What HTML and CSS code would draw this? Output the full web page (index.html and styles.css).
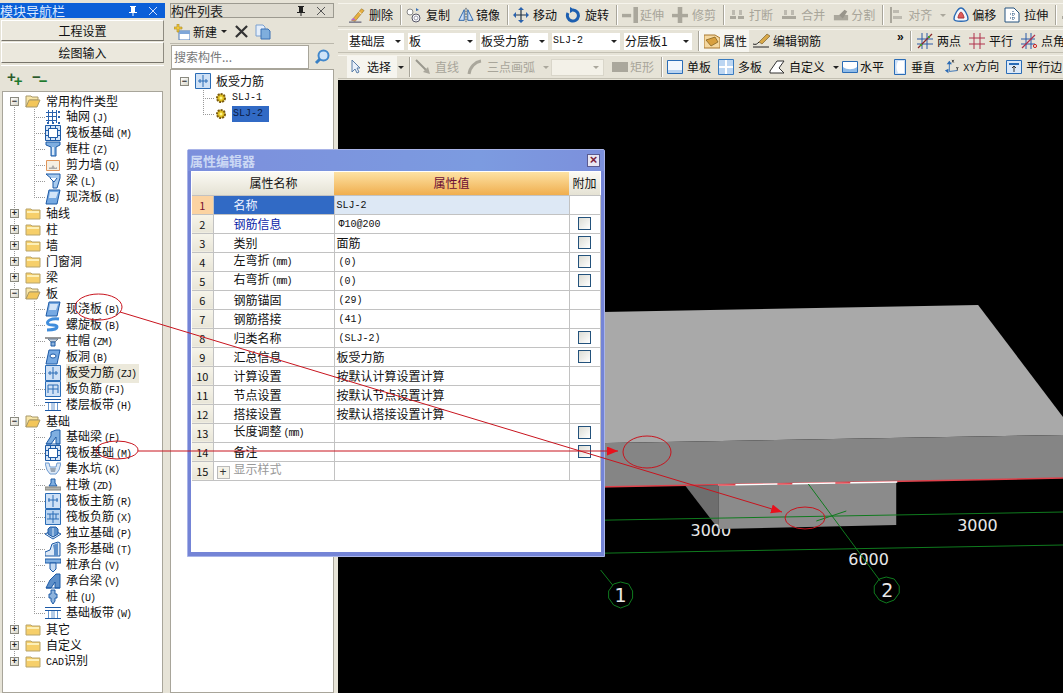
FILE: index.html
```html
<!DOCTYPE html>
<html lang="zh">
<head>
<meta charset="utf-8">
<title>属性编辑器</title>
<link rel="stylesheet" href="styles.css">
</head>
<body>
<svg class="sprite" xmlns="http://www.w3.org/2000/svg">
<defs>
<symbol id="fold" viewBox="0 0 16 16"><path d="M1 4h5l1 1h8v9H1z" fill="#f6cf6a" stroke="#b8a46a"/><path d="M2 6h12v2H2z" fill="#fdf0b8"/></symbol>
<symbol id="open" viewBox="0 0 16 16"><path d="M1 3h5l1 1h6v3H5L1 14z" fill="#f8e6a8" stroke="#a89868"/><path d="M1 14l3-7h11l-3 7z" fill="#f3c65a" stroke="#a89868"/></symbol>
<symbol id="grid" viewBox="0 0 16 16"><path d="M1 3.500h11M1 7.500h11M1 11.500h11M3.500 1v13M7.500 1v13M11.500 1v13" stroke="#2a62ad" fill="none"/><path d="M13 2h2v2h-2zM13 7h2v2h-2zM2 13h2v2H2zM7 13h2v2H7zM13 13h2v2h-2z" fill="#2a62ad"/></symbol>
<symbol id="raft" viewBox="0 0 16 16"><path d="M.5.5h15v15H.5z" fill="#d5e5f7" stroke="#1d5aa6"/><path d="M3.500 3.500h9v9h-9z" fill="#fff" stroke="#1d5aa6"/><path d="M0 5.500h3M0 10.500h3M13 5.500h3M13 10.500h3M5.500 0v3M10.500 0v3M5.500 13v3M10.500 13v3" stroke="#1d5aa6"/></symbol>
<symbol id="col" viewBox="0 0 16 16"><path d="M1 1h14v3l-4 2v9H6V6L1 4z" fill="#7faee0" stroke="#1d5aa6"/><path d="M7 6h2v8H7z" fill="#d9e8f8"/></symbol>
<symbol id="wall" viewBox="0 0 16 16"><path d="M1.500 3.500h13v10h-13z" fill="#f4efe4" stroke="#e0955a"/><path d="M4 11l1-1 1 1 2-3 2 3 2-1v2H4z" fill="#aaa"/></symbol>
<symbol id="beam" viewBox="0 0 16 16"><path d="M1 1h14v4l-3 10H8V7z" fill="#a9cbee" stroke="#1d5aa6"/><path d="M5 5l4 4 3-4" fill="#fff" stroke="#1d5aa6"/></symbol>
<symbol id="slab" viewBox="0 0 16 16"><path d="M4 1h11l-3 14H1z" fill="#76a9e2" stroke="#1d5aa6"/><path d="M5 3h8l-2 6H4z" fill="#d4e5f8"/></symbol>
<symbol id="spir" viewBox="0 0 16 16"><path d="M14 2C6 1 1 4 3 7c2 2 9 0 9 3 0 2-5 3-10 3" fill="none" stroke="#3f8ddc" stroke-width="3"/></symbol>
<symbol id="cap" viewBox="0 0 16 16"><path d="M0 4h16v2H0z" fill="#999"/><path d="M3 6h10l-3 3H6z" fill="#c9d5e2" stroke="#6d7f93"/><path d="M6 9h4v4H6z" fill="#8eb3dc" stroke="#1d5aa6"/></symbol>
<symbol id="hole" viewBox="0 0 16 16"><path d="M4 1h11l-3 14H1z" fill="#76a9e2" stroke="#1d5aa6"/><ellipse cx="8" cy="7" rx="3" ry="2" fill="#fff" stroke="#1d5aa6"/></symbol>
<symbol id="bar" viewBox="0 0 16 16"><path d="M.5.500h15v15H.5z" fill="#cfe1f6" stroke="#2a6cb6"/><path d="M8 2v12M3 8h10M5 6v4M11 6v4" stroke="#2a6cb6" fill="none"/></symbol>
<symbol id="neg" viewBox="0 0 16 16"><path d="M.5.500h15v15H.5z" fill="#cfe1f6" stroke="#2a6cb6"/><path d="M3 4h10v4H3zM8 4v9M3 8v4M13 8v4" stroke="#2a6cb6" fill="none"/></symbol>
<symbol id="band" viewBox="0 0 16 16"><path d="M0 2.500h16M0 13.500h16M0 5.500h16" stroke="#1d5aa6"/><path d="M3.500 6v7M7 6v7M9 6v7M12.500 6v7" stroke="#6d9ad0"/></symbol>
<symbol id="fbeam" viewBox="0 0 16 16"><path d="M1 15l5-8V3l5-2h4v14H11V8L6 15z" fill="#7faee0" stroke="#1d5aa6"/><path d="M1 15h14" stroke="#1d5aa6"/></symbol>
<symbol id="pit" viewBox="0 0 16 16"><path d="M0 2h4l1 4h6l1-4h4l-2 7-3 4H5L2 9z" fill="#dce8f6" stroke="#6d9ad0"/><path d="M5 7h6l-1 4H6z" fill="#9aa7b6"/></symbol>
<symbol id="pier" viewBox="0 0 16 16"><path d="M6 2h4v4l2 3H4l2-3z" fill="#7faee0" stroke="#1d5aa6"/><path d="M0 10h16v3H0z" fill="#b5b5b0" stroke="#85857f"/></symbol>
<symbol id="rmain" viewBox="0 0 16 16"><path d="M.5.500h15v15H.5z" fill="#cfe1f6" stroke="#2a6cb6"/><path d="M8 2v12M3 7h10M4 5v4M12 5v4" stroke="#2a6cb6" fill="none"/></symbol>
<symbol id="rneg" viewBox="0 0 16 16"><path d="M.5.500h15v15H.5z" fill="#bcd6f2" stroke="#2a6cb6"/><path d="M2 5h12M2 10h12M8 2v12M5 5v5M11 5v5" stroke="#2a6cb6" fill="none"/></symbol>
<symbol id="iso" viewBox="0 0 16 16"><path d="M0 9l8-4 8 4-8 5z" fill="#e5eef8" stroke="#1d5aa6"/><path d="M5 2h6l2 2v5l-5 3-5-3V4z" fill="#5d8fc9" stroke="#1d5aa6"/><path d="M8 3v8" stroke="#dbe9f8"/></symbol>
<symbol id="strip" viewBox="0 0 16 16"><path d="M0 15v-4l5-2 2-6 6-2 2 1v13z" fill="#dce8f6" stroke="#1d5aa6"/><path d="M8 4l5-2v13H9V9z" fill="#5d8fc9"/></symbol>
<symbol id="pcap" viewBox="0 0 16 16"><path d="M0 2h16v4H0z" fill="#7faee0" stroke="#1d5aa6"/><path d="M5 6h6v6l-3 3-3-3z" fill="#c4daf2" stroke="#1d5aa6"/></symbol>
<symbol id="cbeam" viewBox="0 0 16 16"><path d="M1 15l4-8 6-6h4v14H10V9L6 15z" fill="#5d8fc9" stroke="#1d5aa6"/><path d="M1 15h14" stroke="#1d5aa6"/></symbol>
<symbol id="pile" viewBox="0 0 16 16"><path d="M6 1h4v4h2v4H10v3l-2 3-2-3V9H4V5h2z" fill="#8eb3dc" stroke="#1d5aa6"/></symbol>
<symbol id="gear" viewBox="0 0 12 12"><circle cx="6" cy="6" r="4" fill="#e0c020" stroke="#7a5a10" stroke-dasharray="2 1" stroke-width="2"/><circle cx="6" cy="6" r="1.500" fill="#fff48a"/></symbol>
<symbol id="newi" viewBox="0 0 16 16"><path d="M5 7h11v9H5z" fill="#fff" stroke="#4a78b8"/><path d="M5 7h11v3H5z" fill="#7fa6d8"/><path d="M3 0h2v3h3v2H5v3H3V5H0V3h3z" fill="#f0c83c" stroke="#a88820" stroke-width=".6"/></symbol>
<symbol id="cross" viewBox="0 0 14 14"><path d="M1 1l12 12M13 1L1 13" stroke="#333" stroke-width="2.400"/></symbol>
<symbol id="docs" viewBox="0 0 16 16"><path d="M1 1h7l2 2v9H1z" fill="#e4eefa" stroke="#7aa0d0"/><path d="M6 5h7l2 2v8H6z" fill="#7faedd" stroke="#3a70b4"/></symbol>
<symbol id="srch" viewBox="0 0 16 16"><circle cx="9.500" cy="6.500" r="5" fill="#cfe4f8" stroke="#4288cc" stroke-width="2"/><path d="M6 10l-4 4" stroke="#3a80c4" stroke-width="3"/></symbol>
<symbol id="brush" viewBox="0 0 18 18"><path d="M3 15L14 2l3 2L7 16z" fill="#e8b040" stroke="#8a6a20" stroke-width=".6"/><path d="M11 5l3 3" stroke="#fff"/><path d="M0 17h14" stroke="#335"/><path d="M2 15l3-3 3 3z" fill="#b66acb"/></symbol>
<symbol id="copy" viewBox="0 0 16 16"><circle cx="4" cy="5" r="3" fill="#fff" stroke="#888"/><circle cx="10" cy="11" r="4" fill="#fff" stroke="#556"/><circle cx="10" cy="11" r="2" fill="none" stroke="#99a"/><path d="M10 1l3 2-3 1z" fill="#3a70b4"/></symbol>
<symbol id="mirr" viewBox="0 0 18 16"><path d="M7 2L1 14h6zM11 2l6 12h-6z" fill="#cfe1f6" stroke="#1d5aa6"/><path d="M9 0v16" stroke="#234" stroke-dasharray="2 1"/></symbol>
<symbol id="move" viewBox="0 0 16 16"><path d="M8 1v14M1 8h14" stroke="#234" stroke-width="1.200"/><path d="M8 0l3 3H5zM8 16l3-3H5zM0 8l3 3V5zM16 8l-3 3V5z" fill="#2a62ad"/></symbol>
<symbol id="rota" viewBox="0 0 16 16"><path d="M8 3a5.500 5.500 0 1 1-5 3" fill="none" stroke="#1d5fb0" stroke-width="3"/><path d="M5 0l5 3-5 3z" fill="#1d5fb0"/></symbol>
<symbol id="ext" viewBox="0 0 14 14"><path d="M0 6h8v3H0z" fill="#aaa79c"/><path d="M10 0h4v14h-4z" fill="#aaa79c"/></symbol>
<symbol id="trim" viewBox="0 0 14 14"><path d="M0 6h14v3H0z" fill="#aaa79c"/><path d="M5 0h4v14H5z" fill="#aaa79c"/></symbol>
<symbol id="brk" viewBox="0 0 16 16"><path d="M1 9h6v3H1zM9 9h6v3H9z" fill="#aaa79c"/><path d="M3 3h3v5H3zM10 3h3v5h-3z" fill="#bdbab0"/></symbol>
<symbol id="merg" viewBox="0 0 16 16"><path d="M1 9h14v3H1z" fill="#aaa79c"/><path d="M3 3h3v5H3zM10 3h3v5h-3z" fill="#bdbab0"/></symbol>
<symbol id="splt" viewBox="0 0 18 16"><path d="M1 8h16v6H1z" fill="#aaa79c"/><path d="M7 8l6-6 3 2-5 8z" fill="#98958b"/></symbol>
<symbol id="algn" viewBox="0 0 14 16"><path d="M1 0h2v16H1z" fill="#aaa79c"/><path d="M4 3h6v3H4zM4 9h9v3H4z" fill="#bdbab0"/></symbol>
<symbol id="offs" viewBox="0 0 16 16"><path d="M1 12C1 8 5 1 8 1s7 7 7 11c0 3-14 3-14 0z" fill="#f4f6fb" stroke="#2a6ab4" stroke-width="1.400"/><path d="M5 11c0-2 2-6 3-6s3 4 3 6z" fill="#e05c5c" stroke="#a33"/></symbol>
<symbol id="strt" viewBox="0 0 16 16"><path d="M1 1h9l5 5v9H1z" fill="#fff" stroke="#24527e"/><path d="M9 4v9M6 7h6M6 11h6" stroke="#24527e" stroke-dasharray="1 1"/></symbol>
<symbol id="prop" viewBox="0 0 16 16"><path d="M0 2h11l5 3v10H0z" fill="#f5d8a0" stroke="#a87830"/><path d="M2 7l9-3 3 5-7 4z" fill="#d8a040" stroke="#7a5a18" stroke-width=".7"/></symbol>
<symbol id="edit" viewBox="0 0 18 16"><path d="M6 9L14 1l3 2-8 8z" fill="#d8a848" stroke="#6a5020" stroke-width=".6"/><path d="M0 14h16M0 11c3 1 4 0 6-2" stroke="#222" fill="none"/></symbol>
<symbol id="twop" viewBox="0 0 16 16"><path d="M0 6h16M0 11h16M5 0v16M10 0v16" stroke="#2a5aa8"/><path d="M1 15L15 1" stroke="#8c2a2a" stroke-width="1.200"/><path d="M3 11h2v2H3zM11 3h2v2h-2z" fill="#4a9a2a"/></symbol>
<symbol id="para" viewBox="0 0 16 16"><path d="M0 5h16M0 11h16M5 0v16M11 0v16" stroke="#b0304a"/></symbol>
<symbol id="angl" viewBox="0 0 16 16"><path d="M0 6h14M0 11h14M5 0v16M10 0v16" stroke="#2a5aa8"/><path d="M1 15L14 2" stroke="#b0304a" stroke-width="1.200"/><circle cx="14" cy="13" r="1.600" fill="none" stroke="#d02020"/></symbol>
<symbol id="arrw" viewBox="0 0 10 16"><path d="M1 1v12l3-3 2 4 2-1-2-4h3z" fill="#e8f0fa" stroke="#5a7ea8"/></symbol>
<symbol id="line" viewBox="0 0 16 16"><path d="M1 1l10 10" stroke="#9a988e" stroke-width="2"/><path d="M15 15l-7-2 5-5z" fill="#aaa79c"/></symbol>
<symbol id="arc" viewBox="0 0 16 16"><path d="M2 15C3 8 8 3 14 2" stroke="#aaa79c" stroke-width="3" fill="none"/></symbol>
<symbol id="rect" viewBox="0 0 16 16"><path d="M0 3h16v10H0z" fill="#aaa79c"/></symbol>
<symbol id="sing" viewBox="0 0 16 16"><path d="M.5 1.500h15v13H.5z" fill="#f2f7fd" stroke="#2a6cb6"/><path d="M1 11h14v3H1z" fill="#b7d2f0"/></symbol>
<symbol id="mult" viewBox="0 0 16 16"><path d="M.5.500h15v15H.5z" fill="#bcd6f2" stroke="#3a7cc0"/><path d="M8 1v14M1 8h14" stroke="#fff" stroke-width="2"/></symbol>
<symbol id="cust" viewBox="0 0 16 16"><path d="M1 12L8 2h7l-5 7 5 5H1z" fill="#fff" stroke="#333"/></symbol>
<symbol id="horz" viewBox="0 0 16 16"><path d="M.5 2.500h15v11H.5z" fill="#fff" stroke="#2a6cb6"/><path d="M1 8c4 3 10 3 14 0v5H1z" fill="#8fbbe8"/></symbol>
<symbol id="vert" viewBox="0 0 16 16"><path d="M2.500.5h11v15h-11z" fill="#cfe1f6" stroke="#2a6cb6"/><path d="M6 2C4 6 4 10 6 14h6V2z" fill="#fff"/></symbol>
<symbol id="xy" viewBox="0 0 18 18"><path d="M6 3v11M6 14l9-1" stroke="#2a6ab4" fill="none"/><path d="M6 2l3 4H3zM1 13l4-2v5z" fill="#2a6ab4"/><path d="M9 1l2 3M11 1L9 4M14 9l1 2 1-2M15 11v2" stroke="#333" fill="none"/></symbol>
<symbol id="pare" viewBox="0 0 16 16"><path d="M.5 1.500h15v13H.5z" fill="#dce9f8" stroke="#2a6cb6"/><path d="M3 5h10" stroke="#2a6cb6" stroke-width="2"/><path d="M8 13V7M6 9l2-2 2 2" stroke="#333" fill="none"/></symbol>
<symbol id="pin" viewBox="0 0 10 12"><path d="M2 1h6v1H7v5h2v1H5.500v3h-1V8H1V7h2V2H2z" fill="currentColor"/></symbol>
<symbol id="shut" viewBox="0 0 10 10"><path d="M1 1l8 8M9 1L1 9" stroke="currentColor" fill="none"/></symbol>
</defs>
</svg>

<div class="app">
  <aside class="nav">
    <div class="title active"><span>模块导航栏</span><svg class="pin"><use href="#pin"/></svg><svg class="shut"><use href="#shut"/></svg></div>
    <div class="navbtn">工程设置</div>
    <div class="navbtn">绘图输入</div>
    <div class="navtools"><span class="pm">+<i>+</i></span><span class="pm">−<i>−</i></span></div>
    <ul class="tree">
      <li class="top"><div class="row"><b class="box">−</b><svg class="ic"><use href="#open"/></svg><span class="lb">常用构件类型</span></div>
        <ul>
          <li class="row kid"><svg class="ic"><use href="#grid"/></svg><span class="lb">轴网<span class="k">(J)</span></span></li>
          <li class="row kid"><svg class="ic"><use href="#raft"/></svg><span class="lb">筏板基础<span class="k">(M)</span></span></li>
          <li class="row kid"><svg class="ic"><use href="#col"/></svg><span class="lb">框柱<span class="k">(Z)</span></span></li>
          <li class="row kid"><svg class="ic"><use href="#wall"/></svg><span class="lb">剪力墙<span class="k">(Q)</span></span></li>
          <li class="row kid"><svg class="ic"><use href="#beam"/></svg><span class="lb">梁<span class="k">(L)</span></span></li>
          <li class="row kid"><svg class="ic"><use href="#slab"/></svg><span class="lb">现浇板<span class="k">(B)</span></span></li>
        </ul>
      </li>
      <li class="top"><div class="row"><b class="box">+</b><svg class="ic"><use href="#fold"/></svg><span class="lb">轴线</span></div></li>
      <li class="top"><div class="row"><b class="box">+</b><svg class="ic"><use href="#fold"/></svg><span class="lb">柱</span></div></li>
      <li class="top"><div class="row"><b class="box">+</b><svg class="ic"><use href="#fold"/></svg><span class="lb">墙</span></div></li>
      <li class="top"><div class="row"><b class="box">+</b><svg class="ic"><use href="#fold"/></svg><span class="lb">门窗洞</span></div></li>
      <li class="top"><div class="row"><b class="box">+</b><svg class="ic"><use href="#fold"/></svg><span class="lb">梁</span></div></li>
      <li class="top"><div class="row"><b class="box">−</b><svg class="ic"><use href="#open"/></svg><span class="lb">板</span></div>
        <ul>
          <li class="row kid"><svg class="ic"><use href="#slab"/></svg><span class="lb">现浇板<span class="k">(B)</span></span></li>
          <li class="row kid"><svg class="ic"><use href="#spir"/></svg><span class="lb">螺旋板<span class="k">(B)</span></span></li>
          <li class="row kid"><svg class="ic"><use href="#cap"/></svg><span class="lb">柱帽<span class="k">(ZM)</span></span></li>
          <li class="row kid"><svg class="ic"><use href="#hole"/></svg><span class="lb">板洞<span class="k">(B)</span></span></li>
          <li class="row kid"><svg class="ic"><use href="#bar"/></svg><span class="lb sel">板受力筋<span class="k">(ZJ)</span></span></li>
          <li class="row kid"><svg class="ic"><use href="#neg"/></svg><span class="lb">板负筋<span class="k">(FJ)</span></span></li>
          <li class="row kid"><svg class="ic"><use href="#band"/></svg><span class="lb">楼层板带<span class="k">(H)</span></span></li>
        </ul>
      </li>
      <li class="top"><div class="row"><b class="box">−</b><svg class="ic"><use href="#open"/></svg><span class="lb">基础</span></div>
        <ul>
          <li class="row kid"><svg class="ic"><use href="#fbeam"/></svg><span class="lb">基础梁<span class="k">(F)</span></span></li>
          <li class="row kid"><svg class="ic"><use href="#raft"/></svg><span class="lb">筏板基础<span class="k">(M)</span></span></li>
          <li class="row kid"><svg class="ic"><use href="#pit"/></svg><span class="lb">集水坑<span class="k">(K)</span></span></li>
          <li class="row kid"><svg class="ic"><use href="#pier"/></svg><span class="lb">柱墩<span class="k">(ZD)</span></span></li>
          <li class="row kid"><svg class="ic"><use href="#rmain"/></svg><span class="lb">筏板主筋<span class="k">(R)</span></span></li>
          <li class="row kid"><svg class="ic"><use href="#rneg"/></svg><span class="lb">筏板负筋<span class="k">(X)</span></span></li>
          <li class="row kid"><svg class="ic"><use href="#iso"/></svg><span class="lb">独立基础<span class="k">(P)</span></span></li>
          <li class="row kid"><svg class="ic"><use href="#strip"/></svg><span class="lb">条形基础<span class="k">(T)</span></span></li>
          <li class="row kid"><svg class="ic"><use href="#pcap"/></svg><span class="lb">桩承台<span class="k">(V)</span></span></li>
          <li class="row kid"><svg class="ic"><use href="#cbeam"/></svg><span class="lb">承台梁<span class="k">(V)</span></span></li>
          <li class="row kid"><svg class="ic"><use href="#pile"/></svg><span class="lb">桩<span class="k">(U)</span></span></li>
          <li class="row kid"><svg class="ic"><use href="#band"/></svg><span class="lb">基础板带<span class="k">(W)</span></span></li>
        </ul>
      </li>
      <li class="top"><div class="row"><b class="box">+</b><svg class="ic"><use href="#fold"/></svg><span class="lb">其它</span></div></li>
      <li class="top"><div class="row"><b class="box">+</b><svg class="ic"><use href="#fold"/></svg><span class="lb">自定义</span></div></li>
      <li class="top"><div class="row"><b class="box">+</b><svg class="ic"><use href="#fold"/></svg><span class="lb"><span class="m">CAD</span>识别</span></div></li>
    </ul>
  </aside>

  <aside class="list">
    <div class="title"><span>构件列表</span><svg class="pin"><use href="#pin"/></svg><svg class="shut"><use href="#shut"/></svg></div>
    <div class="listtools">
      <svg class="ic"><use href="#newi"/></svg><span>新建</span><i class="dn"></i>
      <svg class="ic x"><use href="#cross"/></svg>
      <svg class="ic"><use href="#docs"/></svg>
    </div>
    <div class="search"><div class="sbox">搜索构件...</div><svg class="ic"><use href="#srch"/></svg></div>
    <div class="ltree">
      <div class="lroot"><b class="box">−</b><svg class="ic"><use href="#bar"/></svg><span>板受力筋</span></div>
      <div class="lkid"><svg class="gear"><use href="#gear"/></svg><span class="m">SLJ-1</span></div>
      <div class="lkid"><svg class="gear"><use href="#gear"/></svg><span class="m on">SLJ-2</span></div>
    </div>
  </aside>

  <main class="main">
    <div class="tb r1">
      <div class="t"><svg class="ic"><use href="#brush"/></svg>删除</div><i class="sep"></i>
      <div class="t"><svg class="ic"><use href="#copy"/></svg>复制</div>
      <div class="t g2"><svg class="ic"><use href="#mirr"/></svg>镜像</div><i class="sep"></i>
      <div class="t"><svg class="ic"><use href="#move"/></svg>移动</div>
      <div class="t"><svg class="ic"><use href="#rota"/></svg>旋转</div><i class="sep"></i>
      <div class="t off g2"><svg class="ic"><use href="#ext"/></svg>延伸</div>
      <div class="t off"><svg class="ic"><use href="#trim"/></svg>修剪</div><i class="sep"></i>
      <div class="t off"><svg class="ic"><use href="#brk"/></svg>打断</div>
      <div class="t off"><svg class="ic"><use href="#merg"/></svg>合并</div>
      <div class="t off g2"><svg class="ic"><use href="#splt"/></svg>分割</div><i class="sep"></i>
      <div class="t off m7"><svg class="ic"><use href="#algn"/></svg>对齐<i class="dn"></i></div>
      <div class="t g3"><svg class="ic"><use href="#offs"/></svg>偏移</div>
      <div class="t"><svg class="ic"><use href="#strt"/></svg>拉伸</div><i class="sep"></i>
      <svg class="ic"><use href="#brk"/></svg>
    </div>
    <div class="tb r2">
      <div class="cb first">基础层<i class="dn"></i></div>
      <div class="cb">板<i class="dn"></i></div>
      <div class="cb">板受力筋<i class="dn"></i></div>
      <div class="cb"><span class="m">SLJ-2</span><i class="dn"></i></div>
      <div class="cb">分层板1<i class="dn"></i></div>
      <i class="sep"></i>
      <div class="t hot"><svg class="ic"><use href="#prop"/></svg>属性</div>
      <div class="t g2"><svg class="ic w18"><use href="#edit"/></svg>编辑钢筋</div>
      <span class="more">»</span>
      <i class="sep"></i>
      <div class="t"><svg class="ic"><use href="#twop"/></svg>两点</div>
      <div class="t"><svg class="ic"><use href="#para"/></svg>平行</div>
      <div class="t"><svg class="ic"><use href="#angl"/></svg>点角</div>
    </div>
    <div class="tb r3">
      <div class="t pick"><svg class="ic a"><use href="#arrw"/></svg>选择</div><i class="dn"></i><i class="sep"></i>
      <div class="t off"><svg class="ic"><use href="#line"/></svg>直线</div>
      <div class="t off m2"><svg class="ic"><use href="#arc"/></svg>三点画弧<i class="dn"></i></div>
      <div class="emptycb"><i class="dn"></i></div>
      <div class="t off g2"><svg class="ic"><use href="#rect"/></svg>矩形</div><i class="sep"></i>
      <div class="t m7"><svg class="ic"><use href="#sing"/></svg>单板</div>
      <div class="t m7"><svg class="ic"><use href="#mult"/></svg>多板</div>
      <div class="t m3"><svg class="ic"><use href="#cust"/></svg>自定义<i class="dn"></i></div>
      <div class="t g2"><svg class="ic"><use href="#horz"/></svg>水平</div>
      <div class="t g3"><svg class="ic"><use href="#vert"/></svg>垂直</div>
      <div class="t g2 m7"><svg class="ic w18"><use href="#xy"/></svg><span><span class="m">XY</span>方向</span></div>
      <div class="t"><svg class="ic"><use href="#pare"/></svg>平行边</div>
    </div>
    <svg class="scene" viewBox="337 80 726 613" preserveAspectRatio="none">
      <path d="M500 314L978 305 1063 417 1063 435 500 445z" fill="#a9a9a9"/>
      <path d="M500 445L1063 435V478L500 489z" fill="#858585"/>
      <path d="M500 489L1063 478" stroke="#e0404a" stroke-width="1.500"/>
      <path d="M685 486L718 529V485z" fill="#6e6e6e"/>
      <g class="dim"><text x="690" y="536">3000</text><text x="957" y="531">3000</text><text x="848" y="565">6000</text></g>
      <path d="M718 485L896 482V525L718 529z" fill="#8b8b8b"/>
      <path d="M718 485L897 482" stroke="#fff" stroke-width="1.500"/>
      <path d="M718 485L735 484.700M777 484L792 483.800M835 483L850 482.800" stroke="#e0404a" stroke-width="1.500"/>
      <g class="grn">
        <path d="M500 522L1063 512M500 555L1063 545M808 484L880 581M816 521L846 511M600 570L612 585"/>
        <path d="M613 584l7-2 8 2 4 7 0 7-4 7-8 3-7-3-5-7 0-7z"/>
        <path d="M879 579l7-2 8 2 5 7 0 7-5 7-8 3-7-3-5-7 0-7z"/>
      </g>
      <g class="dim"><text class="num" x="620" y="602" text-anchor="middle">1</text><text class="num" x="887" y="597" text-anchor="middle">2</text></g>
    </svg>
  </main>
</div>

<section class="dialog">
  <header class="dtitle"><span>属性编辑器</span><b class="dclose">×</b></header>
  <div class="dbody">
    <table class="grid">
      <colgroup><col class="w0"><col class="w1"><col class="w2"><col class="w3"></colgroup>
      <thead><tr><th class="g"></th><th>属性名称</th><th class="hv">属性值</th><th>附加</th></tr></thead>
      <tbody>
        <tr><td class="g one">1</td><td class="nm act">名称</td><td class="val cur"><span class="m">SLJ-2</span></td><td></td></tr>
        <tr><td class="g">2</td><td class="nm blue">钢筋信息</td><td class="val"><span class="m ind">Φ10@200</span></td><td class="ck"><i></i></td></tr>
        <tr><td class="g">3</td><td class="nm">类别</td><td class="val">面筋</td><td class="ck"><i></i></td></tr>
        <tr><td class="g">4</td><td class="nm">左弯折<span class="k">(mm)</span></td><td class="val"><span class="m ind">(0)</span></td><td class="ck"><i></i></td></tr>
        <tr><td class="g">5</td><td class="nm">右弯折<span class="k">(mm)</span></td><td class="val"><span class="m ind">(0)</span></td><td class="ck"><i></i></td></tr>
        <tr><td class="g">6</td><td class="nm">钢筋锚固</td><td class="val"><span class="m ind">(29)</span></td><td></td></tr>
        <tr><td class="g">7</td><td class="nm">钢筋搭接</td><td class="val"><span class="m ind">(41)</span></td><td></td></tr>
        <tr><td class="g">8</td><td class="nm">归类名称</td><td class="val"><span class="m ind">(SLJ-2)</span></td><td class="ck"><i></i></td></tr>
        <tr><td class="g">9</td><td class="nm">汇总信息</td><td class="val">板受力筋</td><td class="ck"><i></i></td></tr>
        <tr><td class="g">10</td><td class="nm">计算设置</td><td class="val">按默认计算设置计算</td><td></td></tr>
        <tr><td class="g">11</td><td class="nm">节点设置</td><td class="val">按默认节点设置计算</td><td></td></tr>
        <tr><td class="g">12</td><td class="nm">搭接设置</td><td class="val">按默认搭接设置计算</td><td></td></tr>
        <tr><td class="g">13</td><td class="nm">长度调整<span class="k">(mm)</span></td><td class="val"></td><td class="ck"><i></i></td></tr>
        <tr><td class="g">14</td><td class="nm">备注</td><td class="val"></td><td class="ck"><i></i></td></tr>
        <tr><td class="g">15</td><td class="nm grey"><b class="plus">+</b>显示样式</td><td class="val"></td><td></td></tr>
      </tbody>
    </table>
  </div>
</section>

<svg class="marks" viewBox="0 0 1063 693">
  <defs>
    <marker id="head" markerWidth="12" markerHeight="10" refX="11" refY="4.500" orient="auto" markerUnits="userSpaceOnUse"><path d="M0 0L11 4.500 0 9z" fill="#e8101c"/></marker>
  </defs>
  <ellipse cx="98.500" cy="307" rx="23.500" ry="13"/>
  <ellipse cx="117" cy="450" rx="21" ry="9"/>
  <ellipse cx="647" cy="452" rx="24" ry="16"/>
  <ellipse cx="805" cy="518" rx="20" ry="11"/>
  <path d="M138 451H618" marker-end="url(#head)"/>
  <path d="M120 312L782 512" marker-end="url(#head)"/>
</svg>
</body>
</html>
```
FILE: styles.css
```css
* { box-sizing: border-box; }
html, body { margin: 0; height: 693px; overflow: hidden; }
body { background: #e6e3d7; font: 12px/16px "Noto Sans CJK SC", "Liberation Sans", sans-serif; color: #111; }
ul { list-style: none; margin: 0; padding: 0; }
i { font-style: normal; }
.sprite { width: 0; height: 0; position: absolute; }
.m { font: 10px/16px "Liberation Mono", monospace; }
.k { font: 10px/16px "Liberation Mono", monospace; letter-spacing: -1px; margin-left: 2px; }
.ic { width: 16px; height: 16px; flex: none; }
.w18 { width: 18px; }

.app { display: flex; height: 693px; padding-top: 3px; }
.nav { width: 165px; flex: none; display: flex; flex-direction: column; }
.list { width: 164px; flex: none; margin-left: 5px; display: flex; flex-direction: column; }
.main { flex: 1; min-width: 0; margin-left: 4px; display: flex; flex-direction: column; }

.title { height: 15px; display: flex; align-items: center; font-size: 13px; line-height: 15px; color: #222; background: #dedbd0; border: 1px solid #9c9a90; }
.title > span { flex: 1; white-space: nowrap; }
.title.active { background: #0b5fd8; color: #dbe9ff; border: 0; }
.pin { width: 10px; height: 12px; color: #222; margin-right: 10px; }
.shut { width: 10px; height: 10px; color: #555; margin-right: 7px; }
.title.active .pin { color: #fff; }
.title.active .shut { color: #cfe0ff; }

.navbtn { margin: 2px 1px 0; height: 21px; text-align: center; line-height: 20px; background: #ebe8dd; border: 1px solid; border-color: #fff #8e8b80 #77746a #fff; }
.navbtn + .navbtn { margin-top: 1px; }
.navtools { height: 25px; margin: 2px 1px 0; padding: 5px 0 0 6px; display: flex; gap: 9px; border-top: 1px solid #fff; }
.pm { font: 700 15px/12px "Liberation Sans", sans-serif; color: #2b5a2b; width: 16px; letter-spacing: -2px; display: flex; }
.pm i { margin-top: 4px; color: #1d7a2d; }

.tree { flex: 1; margin: 1px 2px 0; background: #fff; border: 1px solid #a8a59a; padding: 1px 0 0 0; }
.row { height: 16px; display: flex; align-items: center; white-space: nowrap; }
.tree > .top { background: repeating-linear-gradient(to bottom, #999 0 1px, transparent 1px 2px) 11px 0 / 1px 100% no-repeat; }
.tree > .top:first-child { background-position: 11px 8px; }
.tree > .top:last-child { background-size: 1px 8px; }
.top > .row { padding-left: 7px; }
.box { width: 9px; height: 9px; margin-right: 6px; flex: none; background: linear-gradient(135deg, #fff, #d9d6c8); border: 1px solid #8a8a80; font: 700 9px/6px "Liberation Sans", sans-serif; text-align: center; color: #222; display: block; }
.top > .row .ic { margin-right: 5px; }
.kid { padding-left: 42px; background-image: repeating-linear-gradient(to bottom, #999 0 1px, transparent 1px 2px), repeating-linear-gradient(to right, #999 0 1px, transparent 1px 2px); background-repeat: no-repeat; background-position: 31px 0, 31px 8px; background-size: 1px 100%, 11px 1px; }
.kid:last-child { background-size: 1px 9px, 11px 1px; }
.kid .ic { margin-right: 5px; }
.sel { background: #ece9db; padding-right: 3px; }

.listtools { height: 25px; margin-top: 1px; padding: 1px 0 0 4px; display: flex; align-items: center; font-size: 12px; border-bottom: 1px solid #bbb8ac; }
.listtools span { margin-left: 3px; }
.dn { display: inline-block; width: 0; height: 0; border: 3px solid transparent; border-top: 3px solid #222; border-bottom: 0; margin-left: 4px; flex: none; align-self: center; }
.off .dn { border-top-color: #aaa79c; }
.listtools .x { width: 13px; height: 13px; margin: 0 0 0 8px; }
.listtools .x + .ic { margin-left: 7px; }
.search { height: 27px; display: flex; align-items: center; padding: 0 1px 2px 1px; gap: 2px; }
.sbox { width: 138px; height: 24px; background: #fff; border: 1px solid #a8a59a; color: #777; padding: 2px 2px; line-height: 18px; }
.search .ic { margin-left: 3px; }
.ltree { flex: 1; background: #fff; border: 1px solid #a8a59a; padding-top: 3px; margin-top: -2px; }
.lroot { height: 16px; margin-bottom: 1px; display: flex; align-items: center; padding-left: 9px; white-space: nowrap; }
.lroot .box { margin-right: 6px; }
.lroot span { margin-left: 5px; }
.lkid { height: 16px; margin-left: 32px; padding-left: 12px; display: flex; align-items: center; background-image: repeating-linear-gradient(to bottom, #999 0 1px, transparent 1px 2px), repeating-linear-gradient(to right, #999 0 1px, transparent 1px 2px); background-repeat: no-repeat; background-position: 0 0, 0 8px; background-size: 1px 8px, 12px 1px; }
.lkid:nth-child(2) { background-size: 1px 100%, 12px 1px; }
.gear { width: 12px; height: 12px; margin-right: 5px; }
.on { background: #316ac5; color: #0c1c44; padding: 0 1px; width: 37px; height: 16px; }

.tb { height: 24px; margin-bottom: 2px; display: flex; align-items: center; white-space: nowrap; overflow: hidden; border-top: 1px solid #f6f4ec; border-bottom: 1px solid #c3c0b3; padding-left: 11px; flex: none; }
.t { display: flex; align-items: center; gap: 4px; margin-right: 8px; flex: none; }
.g2 { gap: 2px; }
.g3 { gap: 3px; }
.m2 { margin-right: 2px; }
.m3 { margin-right: 3px; }
.m7 { margin-right: 7px; }
.off { color: #a8a59a; }
.sep { width: 2px; height: 20px; margin: 0 4px 0 -1px; flex: none; border-left: 1px solid #a8a59a; border-right: 1px solid #fff; }
.r2 { padding-left: 10px; }
.r3 { padding-left: 9px; margin-bottom: 1px; }
.cb { width: 68px; height: 17px; margin-right: 4px; background: #fff; display: flex; align-items: center; padding-left: 1px; flex: none; }
.cb .dn { margin-left: auto; margin-right: 3px; }
.first { width: 56px; }
.r2 .sep { margin-left: 2px; margin-right: 0; }
.hot { background: #f6f5ef; height: 22px; padding: 0 2px 0 4px; gap: 3px; margin-right: 4px; width: 49px; }
.more { margin-left: 68px; width: 10px; font: 700 12px/12px "Liberation Sans", sans-serif; margin-top: -8px; flex: none; }
.r2 .more + .sep { margin-left: 3px; margin-right: 5px; }
.pick { background: #f6f5ef; height: 22px; width: 50px; padding-left: 4px; gap: 6px; margin-right: 0; }
.pick + .dn { margin: 0 6px 0 1px; }
.a { width: 10px; }
.emptycb { width: 53px; height: 17px; background: #f3f1e8; border: 1px solid #d9d6ca; display: flex; align-items: center; margin-right: 8px; flex: none; }
.emptycb .dn { margin-left: auto; margin-right: 4px; border-top-color: #aaa79c; }

.scene { flex: 1; display: block; width: 100%; min-height: 0; background: #000; }
.dim text { font: 16px "DejaVu Sans", sans-serif; fill: #e8e8e8; }
.dim text.num { font-size: 19px; }
.grn path { fill: none; stroke: #0f7a1e; stroke-width: 1; }

.dialog { position: absolute; left: 187px; top: 149px; width: 418px; height: 408px; background: #7484d6; border: 1px solid #a9b4e8; border-radius: 2px 2px 0 0; display: flex; flex-direction: column; padding: 0 3px 4px; }
.dtitle { height: 21px; flex: none; display: flex; align-items: center; justify-content: space-between; background: linear-gradient(to right, #7c8fdc, #7c9be0 70%, #7c90dc); margin: 0 -3px; padding: 0 4px 0 2px; color: #cbd8f4; font-weight: 700; font-size: 13px; }
.dclose { width: 13px; height: 13px; background: #e8e6f2; border: 1px solid #5a5a90; color: #7a1f3a; font: 700 13px/10px "Liberation Sans", sans-serif; text-align: center; }
.dbody { flex: 1; background: #fff; padding: 1px 0 0 1px; }
.grid { border-collapse: collapse; table-layout: fixed; width: 408px; }
.w0 { width: 21px; } .w1 { width: 121px; } .w2 { width: 235px; } .w3 { width: 31px; }
.grid th { height: 23px; font-weight: 400; background: linear-gradient(#fbfaf4, #e5e2d4); padding: 0; text-align: center; }
.grid th.hv { background: linear-gradient(#fde2a4, #f0ae4e); color: #6b0c34; }
.grid td { height: 19px; padding: 0; border: 1px solid #c2c2c2; border-left: 0; white-space: nowrap; overflow: hidden; line-height: 14px; }
.grid .m, .grid .k { line-height: 14px; }
.grid td.g { background: linear-gradient(#f6f4ea, #e8e5d8); text-align: center; font-size: 11px; }
.grid td.one { background: #fbd3a2; color: #7a1230; }
.nm { padding-left: 20px !important; }
.val { padding-left: 2px !important; }
.ind { margin-left: 2px; }
.act { background: #316ac5; color: #eef3ff; }
.cur { background: #dde8f5; }
.blue { color: #0a1fa8; }
.grey { color: #999; padding-left: 3px !important; }
.plus { display: inline-block; width: 13px; height: 13px; margin-right: 4px; border: 1px solid #bbb; background: #f4f2e8; color: #333; font: 400 12px/10px "Liberation Sans", sans-serif; text-align: center; vertical-align: -2px; }
.ck { text-align: center; }
.ck i { display: block; width: 13px; height: 13px; margin: 0 auto; border: 1px solid #23527c; background: linear-gradient(135deg, #dcdcd4, #fff); }

.marks { position: absolute; left: 0; top: 0; width: 1063px; height: 693px; pointer-events: none; }
.marks ellipse, .marks path { fill: none; stroke: #c8141e; stroke-width: 1; }
.marks marker path { fill: #e8101c; stroke: none; }
```
